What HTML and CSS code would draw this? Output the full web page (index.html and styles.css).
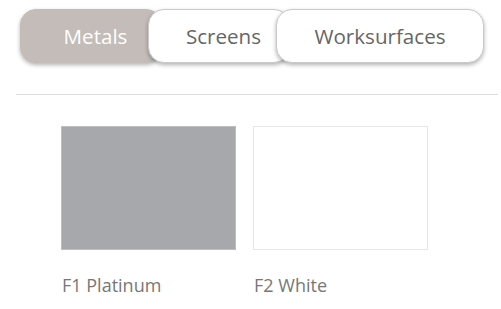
FILE: index.html
```html
<!DOCTYPE html>
<html>
<head>
<meta charset="utf-8">
<link rel="stylesheet" href="styles.css">
</head>
<body>
<div class="tabs">
  <div class="tab tab-active tab-metals">Metals</div>
  <div class="tab tab-screens">Screens</div>
  <div class="tab tab-work">Worksurfaces</div>
</div>
<hr class="divider">
<div class="swatches">
  <div class="swatch">
    <div class="chip chip-platinum"></div>
    <div class="label">F1 Platinum</div>
  </div>
  <div class="swatch">
    <div class="chip chip-white"></div>
    <div class="label">F2 White</div>
  </div>
</div>
</body>
</html>
```

FILE: styles.css
```css
html, body {
  margin: 0;
  padding: 0;
  background: #fff;
  font-family: "Open Sans", "Liberation Sans", sans-serif;
}
.tabs {
  display: flex;
  padding: 9px 0 0 20px;
}
.tab {
  position: relative;
  height: 54px;
  box-sizing: border-box;
  display: flex;
  align-items: center;
  justify-content: center;
  margin-left: -14px;
  border: 1px solid #c9c9c9;
  border-radius: 16px;
  background: #fff;
  color: #666;
  font-size: 20.6px;
  box-shadow: 0 2px 4px rgba(0, 0, 0, 0.3);
}
.tab-metals {
  width: 142px;
  padding-left: 9px;
  margin-left: 0;
}
.tab-screens {
  width: 142px;
  padding-left: 9px;
}
.tab-work {
  width: 208px;
}
.tab-active {
  background: #c4bcb8;
  border-color: #c4bcb8;
  color: #fff;
}
.divider {
  margin: 31px 3px 0 16px;
  border: 0;
  border-top: 1px solid #dcdcdc;
  height: 0;
}
.swatches {
  display: flex;
  gap: 17px;
  padding: 31px 0 0 61px;
}
.swatch {
  display: flex;
  flex-direction: column;
}
.chip {
  width: 175px;
  height: 124px;
  box-sizing: border-box;
}
.chip-platinum {
  background: #a7a8ab;
  border: 1px solid #bdbdbd;
}
.chip-white {
  background: #fff;
  border: 1px solid #e6e6e6;
}
.label {
  margin-top: 23px;
  font-size: 18px;
  color: #777;
  padding-left: 1px;
}
```
